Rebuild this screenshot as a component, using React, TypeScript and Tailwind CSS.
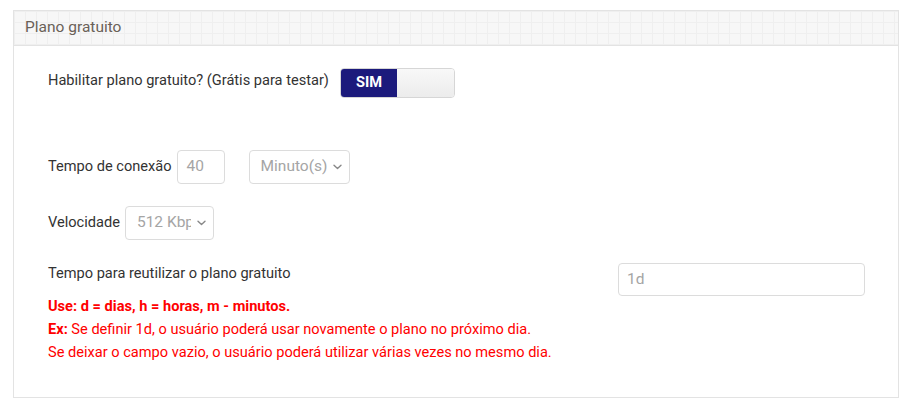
import React from 'react';

const Chevron: React.FC = () => (
  <svg width="9" height="6" viewBox="0 0 9 6" className="shrink-0">
    <path d="M1 1.2l3.5 3.3 3.5-3.3" fill="none" stroke="#888" strokeWidth="1.4" strokeLinecap="round" strokeLinejoin="round" />
  </svg>
);

const Select: React.FC<{ value: string; className: string }> = ({ value, className }) => (
  <div
    className={`flex items-center rounded-[4px] border border-[#dcdcdc] bg-white pl-[11px] pr-[7px] text-[15.5px] text-[#a5a5a5] ${className}`}
  >
    <span className="min-w-0 flex-1 overflow-hidden whitespace-nowrap">{value}</span>
    <span className="ml-[6px]">
      <Chevron />
    </span>
  </div>
);

const App: React.FC = () => {
  return (
    <div className="h-[410px] w-[914px] bg-white pt-[10px] pl-[13px] font-['Roboto',sans-serif]">
      <div className="h-[388px] w-[886px] border border-[#e3e3e3]">
        <div
          className="flex h-[35px] items-center border-b border-[#e3e3e3] bg-[#f7f7f7] pl-[11px] text-[15.5px] text-[#6a6158] bg-[linear-gradient(#efefef_1px,transparent_1px),linear-gradient(90deg,#efefef_1px,transparent_1px)] bg-[size:11px_11px]"
        >
          Plano gratuito
        </div>

        <div className="pl-[34px] pr-[33px] text-[14.6px] text-[#333]">
          <div className="mt-[22px] flex items-center">
            <span className="mt-[-4px]">Habilitar plano gratuito? (Grátis para testar)</span>
            <div className="ml-[11px] flex h-[30px] w-[115px] overflow-hidden rounded-[4px] border border-[#d6d6d6]">
              <div className="flex w-[56px] items-center justify-center bg-[#1c1a7c] text-[14.6px] font-bold text-white">
                SIM
              </div>
              <div className="flex-1 bg-[linear-gradient(#f8f8f8,#ececec)]" />
            </div>
          </div>

          <div className="mt-[52px] flex items-center">
            <span>Tempo de conexão</span>
            <div className="ml-[5px] flex h-[34px] w-[48px] items-center rounded-[4px] border border-[#dcdcdc] pl-[9px] text-[15.5px] text-[#a5a5a5]">
              40
            </div>
            <Select value="Minuto(s)" className="ml-[24px] h-[34px] w-[101px]" />
          </div>

          <div className="mt-[22px] flex items-center">
            <span>Velocidade</span>
            <Select value="512 Kbps" className="ml-[5px] h-[34px] w-[89px]" />
          </div>

          <div className="mt-[23px] flex items-start justify-between">
            <span className="mt-[0px]">Tempo para reutilizar o plano gratuito</span>
            <div className="flex h-[33px] w-[247px] items-center rounded-[4px] border border-[#dcdcdc] pl-[8px] text-[15.5px] text-[#a5a5a5]">
              1d
            </div>
          </div>

          <div className="mt-[-1px] leading-[23px] text-[#ff0000]">
            <div className="font-bold">Use: d = dias, h = horas, m - minutos.</div>
            <div>
              <span className="font-bold">Ex:</span> Se definir 1d, o usuário poderá usar novamente o plano no próximo dia.
            </div>
            <div>Se deixar o campo vazio, o usuário poderá utilizar várias vezes no mesmo dia.</div>
          </div>
        </div>
      </div>
    </div>
  );
};

export default App;
